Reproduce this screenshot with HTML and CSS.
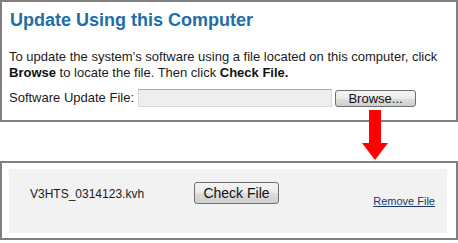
FILE: index.html
```html
<!DOCTYPE html>
<html>
<head>
<meta charset="utf-8">
<link rel="stylesheet" href="styles.css">
</head>
<body>
<div class="page">
  <section class="box box-top">
    <h1 class="title">Update Using this Computer</h1>
    <p class="desc">To update the system’s software using a file located on this computer, click <b>Browse</b> to locate the file. Then click <b>Check File.</b></p>
    <div class="file-row">
      <span class="label">Software Update File:</span>
      <span class="file-input"></span>
      <button class="btn btn-browse">Browse...</button>
    </div>
  </section>
  <section class="box box-bottom">
    <div class="file-panel">
      <span class="fname">V3HTS_0314123.kvh</span>
      <button class="btn btn-check">Check File</button>
      <a class="remove" href="#">Remove File</a>
    </div>
  </section>
  <svg class="arrow" width="26" height="51" viewBox="0 0 26 51">
    <polygon points="7,0 19,0 19,33 26,33 13,50 0,33 7,33" fill="#ff0000"/>
  </svg>
</div>
</body>
</html>
```
FILE: styles.css
```css
html, body {
  margin: 0;
  padding: 0;
  background: #ffffff;
}
body {
  font-family: "Liberation Sans", Arial, sans-serif;
  color: #1a1a1a;
}
.page {
  position: relative;
  width: 458px;
  height: 243px;
}
.box {
  box-sizing: border-box;
  border: 2px solid #808080;
  width: 458px;
}
.box-top {
  height: 122px;
  padding: 7px 7px 0 7px;
}
.title {
  margin: 0 0 0 1px;
  font-size: 18px;
  line-height: 22px;
  font-weight: bold;
  color: #1d6ea9;
}
.desc {
  margin: 18px 0 0 0;
  font-size: 13px;
  line-height: 16px;
}
.desc b {
  color: #111;
}
.file-row {
  display: flex;
  align-items: center;
  margin-top: 8px;
  height: 18px;
}
.label {
  font-size: 13px;
  line-height: 16px;
  margin-right: 4px;
}
.file-input {
  box-sizing: border-box;
  width: 194px;
  height: 18px;
  background: #eeeeee;
  border: 1px solid #d6d6d6;
  border-top-color: #a9a9a9;
  margin-right: 3px;
}
.btn {
  box-sizing: border-box;
  font-family: "Liberation Sans", Arial, sans-serif;
  color: #111;
  border: 1px solid #707070;
  border-radius: 3px;
  background: linear-gradient(#f4f4f4 0%, #ebebeb 50%, #dddddd 51%, #cfcfcf 100%);
  padding: 0;
  margin: 0;
}
.btn-browse {
  width: 81px;
  height: 17px;
  font-size: 13px;
  line-height: 15px;
}
.box-bottom {
  margin-top: 39px;
  height: 79px;
  padding: 6px 9px 5px 7px;
}
.file-panel {
  box-sizing: border-box;
  height: 64px;
  background: #f2f2f2;
  display: grid;
  grid-template-columns: 164px auto 1fr;
  align-items: start;
  padding: 13px 12px 0 21px;
}
.fname {
  font-size: 12px;
  line-height: 14px;
  margin-top: 5px;
}
.btn-check {
  width: 85px;
  height: 22px;
  font-size: 14px;
  line-height: 20px;
}
.remove {
  justify-self: end;
  margin-top: 13px;
  font-size: 11px;
  line-height: 13px;
  color: #17376b;
  text-decoration: underline;
}
.arrow {
  position: absolute;
  left: 362px;
  top: 110px;
}
```
